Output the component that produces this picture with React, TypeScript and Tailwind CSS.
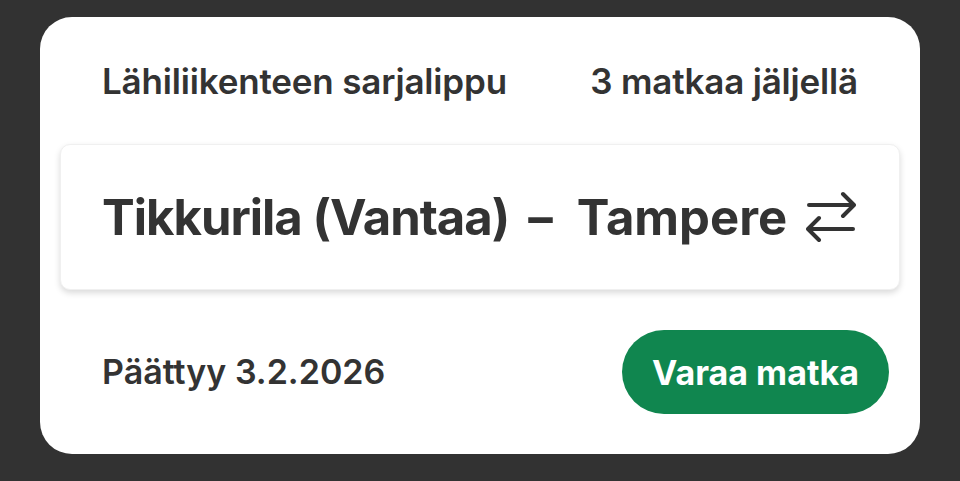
import React from 'react';

const SwapIcon: React.FC = () => (
  <svg width="50" height="52" viewBox="0 0 50 52" fill="none" stroke="currentColor" strokeWidth="4" strokeLinecap="round" strokeLinejoin="round" className="ml-[19px] shrink-0">
    <path d="M3 14H47" />
    <path d="M37 3L48 14L37 25" />
    <path d="M47 38H3" />
    <path d="M13 27L2 38L13 49" />
  </svg>
);

export default function App() {
  return (
    <div className="min-h-screen w-full bg-[#323232] px-10 pt-[17px] pb-[27px]" style={{ fontFamily: 'Inter, "Noto Sans", sans-serif' }}>
      <div className="flex flex-col rounded-[32px] bg-white pt-[45px] pb-10 text-[#333333]">
        <div className="flex items-center justify-between px-[62px] text-[35px] leading-[38px] font-semibold tracking-[-0.005em]">
          <span className="whitespace-nowrap">Lähiliikenteen sarjalippu</span>
          <span className="whitespace-nowrap">3 matkaa jäljellä</span>
        </div>

        <div className="mx-5 mt-[44px] flex h-[146px] items-center whitespace-nowrap rounded-[10px] border border-[#f0f0f0] bg-white px-[41px] text-[49px] font-bold leading-none shadow-[0_3px_6px_rgba(0,0,0,0.15)]">
          <span className="tracking-[-0.02em]">Tikkurila (Vantaa)</span>
          <span className="ml-[19px]">–</span>
          <span className="ml-6">Tampere</span>
          <SwapIcon />
        </div>

        <div className="mt-10 flex items-center justify-between pl-[62px] pr-[31px]">
          <span className="whitespace-nowrap text-[34px] leading-[38px] font-semibold">Päättyy 3.2.2026</span>
          <button className="flex h-[84px] w-[267px] items-center justify-center rounded-full bg-[#10864f] text-[34px] font-bold text-white">
            Varaa matka
          </button>
        </div>
      </div>
    </div>
  );
}
